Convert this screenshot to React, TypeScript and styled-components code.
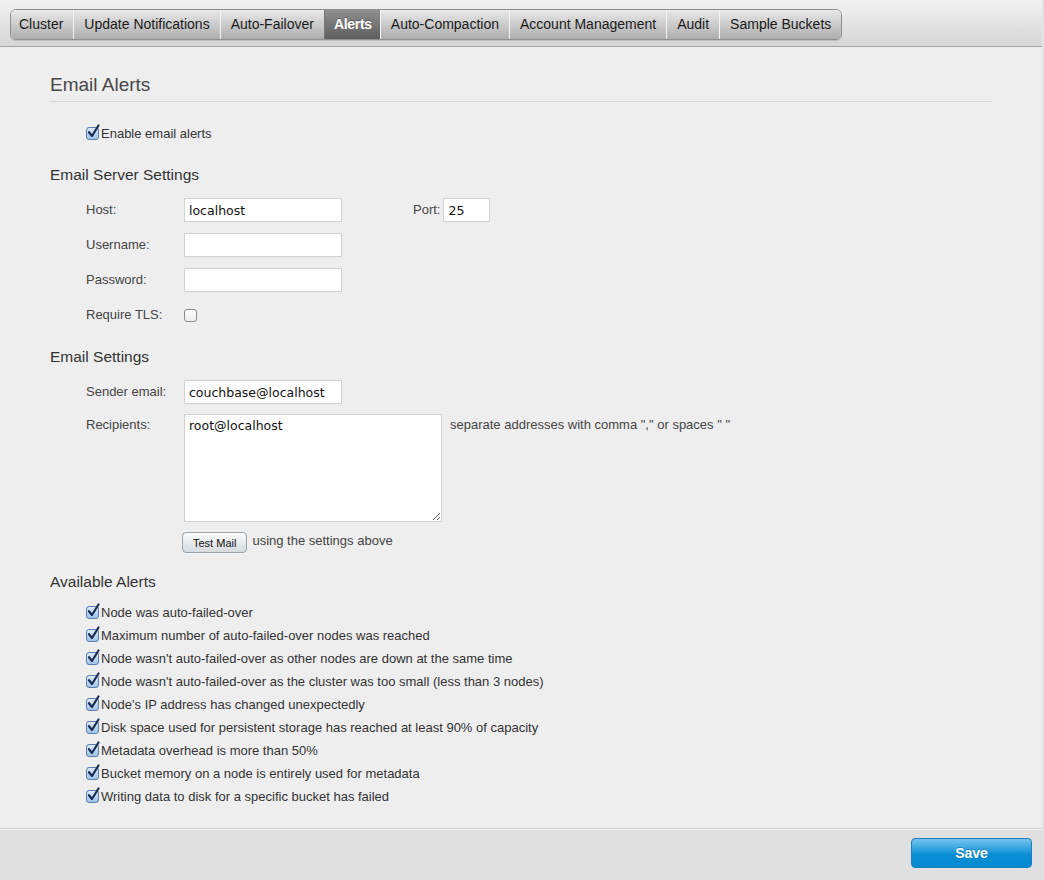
import React, { useState } from "react";
import styled, { createGlobalStyle, css } from "styled-components";

const GlobalStyle = createGlobalStyle`
  html, body {
    margin: 0;
    padding: 0;
    background: #eeeeee;
  }
  body {
    font-family: "Liberation Sans", Arial, Helvetica, sans-serif;
    color: #333;
  }
  * { box-sizing: border-box; }
`;

const TABS = [
  "Cluster",
  "Update Notifications",
  "Auto-Failover",
  "Alerts",
  "Auto-Compaction",
  "Account Management",
  "Audit",
  "Sample Buckets",
];

const ALERTS = [
  "Node was auto-failed-over",
  "Maximum number of auto-failed-over nodes was reached",
  "Node wasn't auto-failed-over as other nodes are down at the same time",
  "Node wasn't auto-failed-over as the cluster was too small (less than 3 nodes)",
  "Node's IP address has changed unexpectedly",
  "Disk space used for persistent storage has reached at least 90% of capacity",
  "Metadata overhead is more than 50%",
  "Bucket memory on a node is entirely used for metadata",
  "Writing data to disk for a specific bucket has failed",
];

const Page = styled.div`
  min-height: 100vh;
  display: flex;
  flex-direction: column;
  border-right: 2px solid #e4e4e4;
`;

const TabBar = styled.nav`
  height: 47px;
  padding: 9px 10px 0;
  background: linear-gradient(#f2f2f2, #d6d6d6);
  border-bottom: 1px solid #a4a4a4;
`;

const TabStrip = styled.div`
  display: inline-flex;
  height: 31px;
  border-radius: 6px;
  overflow: hidden;
  border: 1px solid #8f8f8f;
  box-shadow: 0 1px 1px rgba(0, 0, 0, 0.15);
`;

const Tab = styled.div<{ $active?: boolean }>`
  padding: 0 10px;
  font-size: 14px;
  line-height: 29px;
  color: #1a1a1a;
  white-space: nowrap;
  background: linear-gradient(#e9e9e9, #adadad);
  border-left: 1px solid #f4f4f4;
  &:first-child {
    border-left: none;
    padding-left: 8px;
  }
  ${(p) =>
    p.$active &&
    css`
      padding: 0 8px 0 9px;
      background: linear-gradient(#8e8e8e, #5e5e5e);
      color: #fff;
      font-weight: bold;
      letter-spacing: -0.3px;
      border-left-color: #777;
      text-shadow: 0 -1px 0 rgba(0, 0, 0, 0.3);
    `}
`;

const Content = styled.main`
  flex: 1;
  padding: 26px 50px 20px;
`;

const PageTitle = styled.h1`
  margin: 0;
  font-size: 19px;
  line-height: 24px;
  font-weight: normal;
  color: #474747;
  padding-bottom: 4px;
  border-bottom: 1px solid #d9d9d9;
`;

const SectionTitle = styled.h2<{ $top: number }>`
  margin: ${(p) => p.$top}px 0 0;
  font-size: 15.5px;
  line-height: 20px;
  font-weight: normal;
  color: #333;
`;

const Indent = styled.div<{ $top: number }>`
  margin-top: ${(p) => p.$top}px;
  padding-left: 36px;
  display: flex;
  flex-direction: column;
`;

const FormRow = styled.div<{ $top?: number }>`
  display: flex;
  align-items: flex-start;
  margin-top: ${(p) => p.$top ?? 0}px;
`;

const Label = styled.label<{ $lineHeight?: number }>`
  width: 98px;
  flex: none;
  font-size: 13px;
  line-height: ${(p) => p.$lineHeight ?? 24}px;
  color: #444;
`;

const TextInput = styled.input<{ $width: number }>`
  width: ${(p) => p.$width}px;
  height: 24px;
  border: 1px solid #cfd3d3;
  background: #fff;
  padding: 0 4px;
  font-family: "DejaVu Sans", "Liberation Sans", sans-serif;
  font-size: 12.5px;
  color: #111;
  outline: none;
`;

const TextArea = styled.textarea`
  width: 258px;
  height: 108px;
  border: 1px solid #cfd3d3;
  background: #fff;
  padding: 3px 4px;
  margin: 0;
  font-family: "DejaVu Sans", "Liberation Sans", sans-serif;
  font-size: 12.5px;
  line-height: 16px;
  color: #111;
  outline: none;
`;

const PortLabel = styled.span`
  margin-left: 71px;
  margin-right: 3px;
  font-size: 13px;
  line-height: 24px;
  color: #444;
`;

const Hint = styled.span`
  margin-left: 8px;
  font-size: 13px;
  line-height: 22px;
  color: #444;
`;

const ButtonRow = styled.div`
  display: flex;
  align-items: center;
  gap: 5px;
  margin-top: 10px;
  margin-left: 96px;
`;

const SmallButton = styled.button`
  height: 21px;
  padding: 0 10px;
  border: 1px solid #9aa3aa;
  border-radius: 4px;
  background: linear-gradient(#fbfbfb, #d6dbde);
  font-family: "Liberation Sans", Arial, sans-serif;
  font-size: 11px;
  color: #111;
  box-shadow: 0 1px 0 rgba(255, 255, 255, 0.6);
`;

const ButtonNote = styled.span`
  font-size: 13px;
  color: #444;
  margin-top: -4px;
`;

const CheckRow = styled.label<{ $height: number }>`
  display: flex;
  align-items: center;
  gap: 2px;
  height: ${(p) => p.$height}px;
  font-size: 13px;
  color: #333;
`;

const CheckBoxWrap = styled.span`
  position: relative;
  width: 13px;
  height: 13px;
  flex: none;
`;

const CheckBoxBox = styled.span<{ $checked: boolean }>`
  position: absolute;
  inset: 0;
  border-radius: 3px;
  ${(p) =>
    p.$checked
      ? css`
          border: 1px solid #5d7fa8;
          background: linear-gradient(#dcebfa, #9dc3ea);
        `
      : css`
          border: 1px solid #8c8c8c;
          background: linear-gradient(#fff, #ececec);
        `}
`;

const CheckMark = styled.svg`
  position: absolute;
  left: 1px;
  top: -3px;
  width: 14px;
  height: 15px;
  overflow: visible;
`;

function CheckBox({ checked }: { checked: boolean }) {
  return (
    <CheckBoxWrap>
      <CheckBoxBox $checked={checked} />
      {checked && (
        <CheckMark viewBox="0 0 14 15">
          <path
            d="M2 8.2 L5 12 L11.5 1.5"
            fill="none"
            stroke="#1b2d52"
            strokeWidth="2.2"
            strokeLinecap="round"
            strokeLinejoin="round"
          />
        </CheckMark>
      )}
    </CheckBoxWrap>
  );
}

const AlertList = styled.div`
  margin-top: 9px;
  padding-left: 36px;
  display: flex;
  flex-direction: column;
`;

const Footer = styled.footer`
  height: 52px;
  border-top: 1px solid #cdcdcd;
  box-shadow: inset 0 1px 0 #f6f6f6;
  background: #dfe0df;
  display: flex;
  justify-content: flex-end;
  align-items: flex-start;
  padding: 9px 10px 0;
`;

const SaveButton = styled.button`
  width: 121px;
  height: 30px;
  border: 1px solid #1c7fbd;
  border-radius: 4px;
  background: linear-gradient(#77c3ec, #0a8fd6 55%, #0489d0);
  color: #fff;
  font-family: "Liberation Sans", Arial, sans-serif;
  font-size: 14px;
  font-weight: bold;
  text-shadow: 0 -1px 0 rgba(0, 0, 0, 0.2);
`;

export default function App() {
  const [emailEnabled] = useState(true);

  return (
    <>
      <GlobalStyle />
      <Page>
        <TabBar>
          <TabStrip>
            {TABS.map((t) => (
              <Tab key={t} $active={t === "Alerts"}>
                {t}
              </Tab>
            ))}
          </TabStrip>
        </TabBar>

        <Content>
          <PageTitle>Email Alerts</PageTitle>

          <Indent $top={21}>
            <CheckRow $height={20}>
              <CheckBox checked={emailEnabled} />
              Enable email alerts
            </CheckRow>
          </Indent>

          <SectionTitle $top={22}>Email Server Settings</SectionTitle>
          <Indent $top={13}>
            <FormRow>
              <Label>Host:</Label>
              <TextInput $width={158} defaultValue="localhost" />
              <PortLabel>Port:</PortLabel>
              <TextInput $width={47} defaultValue="25" />
            </FormRow>
            <FormRow $top={11}>
              <Label>Username:</Label>
              <TextInput $width={158} />
            </FormRow>
            <FormRow $top={11}>
              <Label>Password:</Label>
              <TextInput $width={158} type="password" />
            </FormRow>
            <FormRow $top={11}>
              <Label>Require TLS:</Label>
              <CheckRow $height={24}>
                <CheckBox checked={false} />
              </CheckRow>
            </FormRow>
          </Indent>

          <SectionTitle $top={20}>Email Settings</SectionTitle>
          <Indent $top={13}>
            <FormRow>
              <Label>Sender email:</Label>
              <TextInput $width={158} defaultValue="couchbase@localhost" />
            </FormRow>
            <FormRow $top={10}>
              <Label $lineHeight={22}>Recipients:</Label>
              <TextArea defaultValue="root@localhost" />
              <Hint>separate addresses with comma "," or spaces " "</Hint>
            </FormRow>
            <ButtonRow>
              <SmallButton>Test Mail</SmallButton>
              <ButtonNote>using the settings above</ButtonNote>
            </ButtonRow>
          </Indent>

          <SectionTitle $top={19}>Available Alerts</SectionTitle>
          <AlertList>
            {ALERTS.map((a) => (
              <CheckRow key={a} $height={23}>
                <CheckBox checked />
                {a}
              </CheckRow>
            ))}
          </AlertList>
        </Content>

        <Footer>
          <SaveButton>Save</SaveButton>
        </Footer>
      </Page>
    </>
  );
}
